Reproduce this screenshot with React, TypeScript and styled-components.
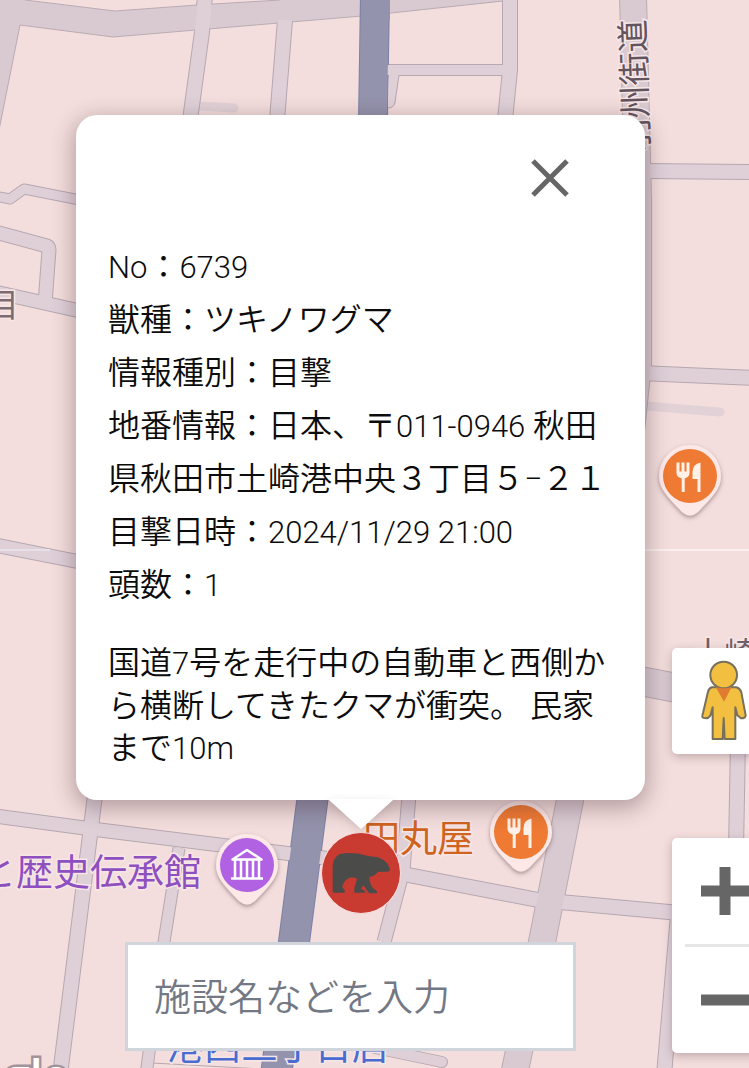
import React from 'react';
import styled, { createGlobalStyle } from 'styled-components';

const GlobalStyle = createGlobalStyle`
  *, *::before, *::after { box-sizing: border-box; }
  body {
    margin: 0;
    background: #f3dedd;
    font-family: Roboto, "Noto Sans CJK JP", sans-serif;
  }
  p { margin: 0; }
  button { padding: 0; border: 0; background: none; cursor: pointer; }
`;

const Page = styled.main`
  position: relative;
  min-height: 100vh;
  overflow: hidden;
  display: flex;
  flex-direction: column;
  padding: 115px 104px 140px 76px;
`;

const MapCanvas = styled.svg`
  position: absolute;
  inset: 0;
  width: 100%;
  height: 100%;
`;

const MapLabel = styled.text<{ $size: number }>`
  font-family: "Noto Sans CJK JP", sans-serif;
  font-size: ${(p) => p.$size}px;
  paint-order: stroke;
  stroke: #f7e6e6;
  stroke-width: 3px;
`;

const Attribution = styled.text`
  font-family: "Open Sans", sans-serif;
  font-size: 46px;
  font-weight: 600;
  fill: #ffffff;
  stroke: #a3939a;
  stroke-width: 5px;
  paint-order: stroke;
`;

const Sighting = styled.section`
  position: relative;
  display: flex;
  flex-direction: column;
  align-items: center;
`;

const Callout = styled.div`
  width: 100%;
  display: flex;
  flex-direction: column;
  align-items: center;
`;

const Card = styled.article`
  width: 100%;
  padding: 0 24px 30px 32px;
  border-radius: 21px;
  background: #ffffff;
  color: #0c0c0c;
  font-size: 32px;
  font-weight: 350;
  box-shadow: 0 6px 21px 3px rgba(60, 30, 40, 0.33);
`;

const CardHeader = styled.header`
  height: 126px;
  display: flex;
  justify-content: flex-end;
  padding: 36px 44px 0 0;
`;

const CloseButton = styled.button`
  width: 54px;
  height: 54px;
  display: grid;
  place-items: center;
`;

const Row = styled.p`
  line-height: 53px;
`;

const Note = styled.p`
  margin-top: 30px;
  line-height: 42px;
`;

const Latin = styled.span`
  font-size: 31px;
  font-weight: 300;
`;

const Tail = styled.svg`
  position: relative;
  width: 64px;
  height: 29px;
  overflow: visible;
  filter: drop-shadow(0 3px 5px rgba(60, 30, 40, 0.15));
`;

const MarkerButton = styled.button`
  width: 80px;
  height: 82px;
  margin-top: 3px;
  border: 1px solid #f6dfe0;
  border-radius: 50%;
  background: #c93a31;
  display: grid;
  place-items: center;
`;

const SearchForm = styled.form`
  position: absolute;
  left: 125px;
  right: 173px;
  bottom: 17px;
`;

const SearchInput = styled.input`
  display: block;
  width: 100%;
  height: 109px;
  padding: 0 26px 4px;
  border: 3px solid #d0d5db;
  border-radius: 0;
  background: #ffffff;
  color: #374151;
  font-family: "Noto Sans CJK JP", sans-serif;
  font-size: 37px;
  font-weight: 350;
  outline: none;

  &::placeholder {
    color: #737885;
    opacity: 1;
  }
`;

const Controls = styled.aside`
  position: absolute;
  right: -28px;
  bottom: 15px;
  display: flex;
  flex-direction: column;
  gap: 84px;
`;

const ControlBox = styled.div`
  width: 105px;
  display: flex;
  flex-direction: column;
  align-items: center;
  border-radius: 5px;
  background: #ffffff;
  box-shadow: 0 3px 10px rgba(60, 30, 40, 0.28);
`;

const ControlButton = styled.button`
  width: 105px;
  height: 106px;
  display: grid;
  place-items: center;
`;

const Divider = styled.hr`
  width: 79px;
  height: 3px;
  margin: 0;
  border: 0;
  background: #e6e6e6;
`;

type Road = { d: string; w: number; tone?: 'major' | 'trunk' };

const roads: Road[] = [
  { d: 'M205 -5L202 32L190 120', w: 15 },
  { d: 'M285 20L277 120', w: 15 },
  { d: 'M385 70H510', w: 11 },
  { d: 'M510 -5V70L505 120', w: 15 },
  { d: 'M645 171L755 172', w: 15 },
  { d: 'M640 373L755 378', w: 15 },
  { d: 'M-5 196L10 199L24 189L80 200', w: 10 },
  { d: 'M-5 232L47 246Q49 247 49 250L45 304', w: 14 },
  { d: 'M-5 292L80 311', w: 14 },
  { d: 'M-5 545L80 562', w: 14 },
  { d: 'M-5 816L92 829L340 860', w: 14 },
  { d: 'M95 795L60 1075', w: 15 },
  { d: 'M179 848L164 942L146 1075', w: 12 },
  { d: 'M409 795L403 870L384 942', w: 14 },
  { d: 'M403 874L538 900L680 913', w: 15 },
  { d: 'M738 740L736 850', w: 15 },
  { d: 'M678 915L664 1075', w: 15 },
  { d: 'M633 -5L638 200L638 365L630 440', w: 27, tone: 'major' },
  { d: 'M571 795L542 942L514 1075', w: 27, tone: 'major' },
  { d: 'M640 681L755 703', w: 29, tone: 'major' },
  { d: 'M375 -5L373 120', w: 29, tone: 'trunk' },
  { d: 'M313 795L294 942L276 1075', w: 31, tone: 'trunk' },
];

const fills = { minor: '#dfd0d8', major: '#d9cad1', trunk: '#9493ad' };
const edges = { minor: '#b6a7b0', major: '#baabb4', trunk: '#7c80a6' };

function Roads() {
  const order = ['minor', 'major', 'trunk'] as const;
  const toneOf = (r: Road) => r.tone ?? 'minor';
  const layer = (tone: 'minor' | 'major' | 'trunk', edge: boolean) =>
    roads
      .filter((r) => toneOf(r) === tone)
      .map((r) => (
        <path
          key={r.d}
          d={r.d}
          fill="none"
          stroke={(edge ? edges : fills)[tone]}
          strokeWidth={edge ? r.w + 1 : r.w - 1}
          strokeLinejoin="round"
        />
      ));
  return (
    <>
      {layer('minor', true)}
      {layer('major', true)}
      <path
        d="M-5 -5H25V0L115 11L197 5L280 0V-5H503V1L391 13L362 16L113 37L20 25L-2 135Z"
        fill={fills.major}
        stroke={edges.major}
      />
      {layer('trunk', true)}
      {order.map((tone) => (
        <g key={tone}>{layer(tone, false)}</g>
      ))}
      <path d="M355 -5H395V12L362 15V-5Z" fill={fills.major} />
      <path d="M362 -5H390V20H361Z" fill={fills.trunk} />
      <path d="M389 66H400L396 102Q395 108 388 108Z" fill={fills.minor} />
      <path d="M399 75L395 102Q394 108 388 108" fill="none" stroke={edges.minor} />
    </>
  );
}

function PlacePin({ x, y, color, children }: { x: number; y: number; color: string; children: React.ReactNode }) {
  return (
    <g transform={`translate(${x} ${y})`}>
      <path
        d="M-31 0A31 31 0 0 1 31 0C31 13 22 21 8 36Q0 43 -8 36C-22 21 -31 13 -31 0Z"
        fill="#fce8e6"
        filter="url(#pin-shadow)"
      />
      <circle r="27" fill={color} />
      {children}
    </g>
  );
}

const Cutlery = () => (
  <g fill="#fff1e8">
    <path d="M-13.500-13.500h3v9h2v-9h3v9h2v-9h3V-3Q-.5 1-5.300 2.500V16h-3V2.500Q-13.500 1-13.500-3Z" />
    <path d="M10.500-13.500V16h-3V3H2.500V-4Q2.500-12 10.500-13.500Z" />
  </g>
);

const Museum = () => (
  <g fill="none" stroke="#fff" strokeWidth="2.500">
    <path d="M-14.500-5.500L0-15L14.500-5.500Z" strokeLinejoin="round" />
    <path d="M-12-5V13M-6-5V13M0-5V13M6-5V13M12-5V13M-16 13.500H16" />
  </g>
);

function MapLayer() {
  return (
    <MapCanvas viewBox="0 0 749 1068" preserveAspectRatio="xMidYMid slice" role="img" aria-label="地図">
      <defs>
        <filter id="pin-shadow" x="-30%" y="-30%" width="160%" height="170%">
          <feDropShadow dx="0" dy="2" stdDeviation="2" floodColor="#5a3c44" floodOpacity="0.5" />
        </filter>
      </defs>
      <rect width="749" height="1068" fill="#f3dedd" />
      <path d="M200 106L234 108M645 406L720 412" stroke="#e2d2d7" strokeWidth="9" strokeLinecap="round" />
      <path d="M375 1048L442 1062" stroke={edges.minor} strokeWidth="12" strokeLinecap="round" />
      <path d="M375 1048L442 1062" stroke={fills.minor} strokeWidth="10" strokeLinecap="round" />
      <path d="M155 1048L152 1063L262 1069" fill="none" stroke={edges.minor} />
      <Roads />
      <path d="M0 550H50" stroke="#e6e0e8" strokeWidth="2" />
      <path d="M640 550H749" stroke="#faf0f0" strokeWidth="2" />

      <MapLabel $size={33} fill="#62545e" transform="translate(649 151) rotate(-92)">羽州街道</MapLabel>
      <MapLabel $size={33} fill="#7d6a72" x="19" y="317" textAnchor="end">目</MapLabel>
      <MapLabel $size={32} fill="#6f6169" x="692" y="665">土崎</MapLabel>
      <MapLabel $size={37} fill="#8e4fbf" x="201" y="886" textAnchor="end">と歴史伝承館</MapLabel>
      <MapLabel $size={37} fill="#cf6421" x="363" y="852">円丸屋</MapLabel>
      <MapLabel $size={37} fill="#4a6cd0" x="167" y="1060">港西三丁目店</MapLabel>
      <Attribution x="69" y="1092" textAnchor="end">Google</Attribution>

      <PlacePin x={690} y={476} color="#ee7a33"><Cutlery /></PlacePin>
      <PlacePin x={521} y={832} color="#ee7a33"><Cutlery /></PlacePin>
      <PlacePin x={247} y={865} color="#b062e3"><Museum /></PlacePin>
    </MapCanvas>
  );
}

const BearIcon = () => (
  <svg width="60" height="42" viewBox="96 182 180 126" aria-hidden="true">
    <path
      fill="#4b4c49"
      d="M101 226Q101 200 122 188Q150 182 180 187Q210 196 237 198Q262 208 268 222L273 236Q272 242 262 241L238 241Q225 255 211 257Q212 278 222 291L234 300L233 306L210 306L193 282L186 292L199 300L198 304L166 304L166 290L174 262Q158 255 146 262Q133 270 130 288L138 298L136 304L101 304Z"
    />
  </svg>
);

const Pegman = () => (
  <svg width="52" height="84" viewBox="114 60 156 252" aria-hidden="true">
    <g fill="#f3bf41" stroke="#77705a" strokeWidth="6" strokeLinejoin="round">
      <path d="M153 145H226Q237 148 241 160L254 229Q253 238 240 238L229 229L223 205V300H191L188 237L185 300H155V205L148 230Q140 242 126 236Q122 233 126 222L141 158Q144 147 153 145Z" />
      <circle cx="188" cy="108" r="40" />
    </g>
    <path d="M164 144Q188 152 212 144L189 188Z" fill="#df7c31" />
  </svg>
);

export default function App() {
  return (
    <>
      <GlobalStyle />
      <Page>
        <MapLayer />
        <Sighting>
          <Callout>
            <Card>
              <CardHeader>
                <CloseButton type="button" aria-label="閉じる">
                  <svg width="38" height="38" viewBox="0 0 38 38" aria-hidden="true">
                    <path d="M2 2L36 36M36 2L2 36" stroke="#666" strokeWidth="5" />
                  </svg>
                </CloseButton>
              </CardHeader>
              <Row><Latin>No</Latin>：<Latin>6739</Latin></Row>
              <Row>獣種：ツキノワグマ</Row>
              <Row>情報種別：目撃</Row>
              <Row>地番情報：日本、〒<Latin>011-0946</Latin> 秋田県秋田市土崎港中央３丁目５−２１</Row>
              <Row>目撃日時：<Latin>2024/11/29 21:00</Latin></Row>
              <Row>頭数：<Latin>1</Latin></Row>
              <Note>
                国道<Latin>7</Latin>号を走行中の自動車と西側から横断してきたクマが衝突。 民家まで<Latin>10m</Latin>
              </Note>
            </Card>
            <Tail viewBox="0 0 64 29" aria-hidden="true">
              <path d="M0 -1H64V0L32 29L0 0Z" fill="#fff" />
            </Tail>
          </Callout>
          <MarkerButton type="button" aria-label="ツキノワグマ">
            <BearIcon />
          </MarkerButton>
        </Sighting>

        <SearchForm role="search" onSubmit={(e) => e.preventDefault()}>
          <SearchInput type="text" aria-label="施設名などを入力" placeholder="施設名などを入力" />
        </SearchForm>

        <Controls>
          <ControlBox>
            <ControlButton type="button" aria-label="ストリートビュー">
              <Pegman />
            </ControlButton>
          </ControlBox>
          <ControlBox>
            <ControlButton type="button" aria-label="拡大">
              <svg width="48" height="48" viewBox="0 0 48 48" aria-hidden="true">
                <path d="M24 0V48M0 24H48" stroke="#666" strokeWidth="11" />
              </svg>
            </ControlButton>
            <Divider />
            <ControlButton type="button" aria-label="縮小">
              <svg width="48" height="48" viewBox="0 0 48 48" aria-hidden="true">
                <path d="M0 24H48" stroke="#666" strokeWidth="11" />
              </svg>
            </ControlButton>
          </ControlBox>
        </Controls>
      </Page>
    </>
  );
}
